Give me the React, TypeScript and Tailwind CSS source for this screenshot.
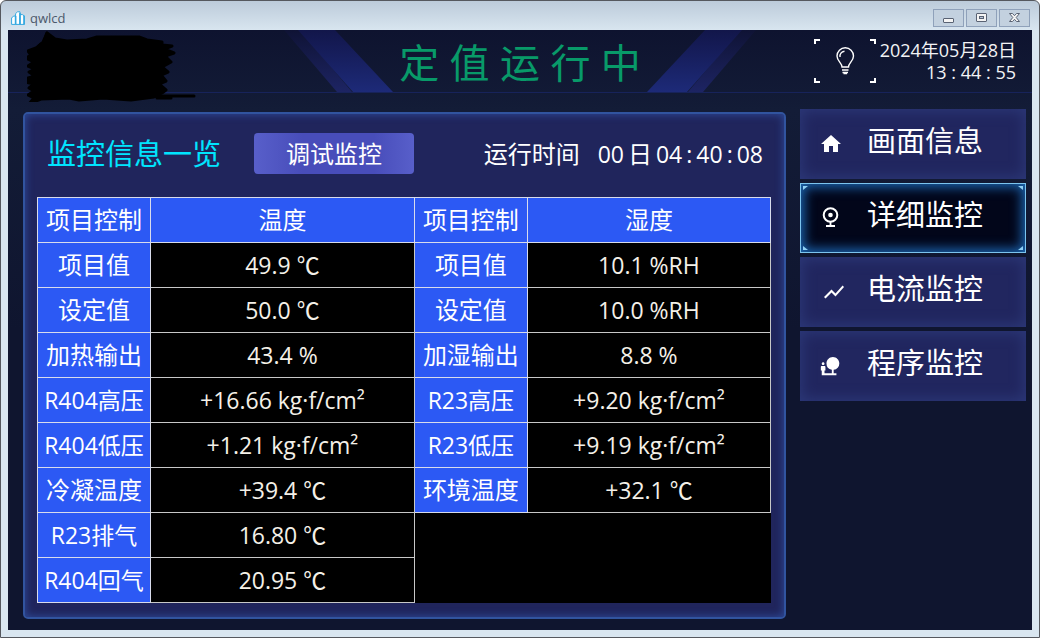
import { MdHome, MdNaturePeople, MdShowChart } from 'react-icons/md';

const rows = [
  ['项目值', '49.9 ℃', '项目值', '10.1 %RH'],
  ['设定值', '50.0 ℃', '设定值', '10.0 %RH'],
  ['加热输出', '43.4 %', '加湿输出', '8.8 %'],
  ['R404高压', '+16.66 kg·f/cm²', 'R23高压', '+9.20 kg·f/cm²'],
  ['R404低压', '+1.21 kg·f/cm²', 'R23低压', '+9.19 kg·f/cm²'],
  ['冷凝温度', '+39.4 ℃', '环境温度', '+32.1 ℃'],
  ['R23排气', '16.80 ℃'],
  ['R404回气', '20.95 ℃'],
];

function WebcamIcon() {
  return (
    <svg width="24" height="24" viewBox="0 0 24 24" fill="none" stroke="currentColor" strokeWidth="2">
      <circle cx="11.500" cy="9" r="6.800" />
      <circle cx="11.500" cy="9" r="2.300" fill="currentColor" stroke="none" />
      <path d="M11.500 16v4M7 20h9" strokeWidth="1.800" />
    </svg>
  );
}

const menu = [
  { label: '画面信息', icon: <MdHome size={24} /> },
  { label: '详细监控', icon: <WebcamIcon />, active: true },
  { label: '电流监控', icon: <MdShowChart size={24} className="ml-[3px]" /> },
  { label: '程序监控', icon: <MdNaturePeople size={22} /> },
];

function TitleBar() {
  const button =
    'flex h-[18px] w-[31px] items-center justify-center border border-[#8fa1ba] bg-[#c3d1df] text-[#4a5262]';
  return (
    <div className="flex h-[29px] items-center justify-between pl-[3px] pr-[2px] pt-1">
      <div className="flex items-center gap-[5px]">
        <svg width="14" height="14" viewBox="0 0 14 14" fill="#fff" stroke="#35a8e0">
          <path d="M.6 13.4V7l2-2h2v8.400z" />
          <path d="M4.600 13.400V2.600l2-1.800h2.400v12.600z" />
          <path d="M9 13.400V3.600h2.400l2 1.400v8.400z" />
          <path d="M4.600 5v8.400M9 2v11.400M13 4.500v9" strokeWidth="1.600" />
        </svg>
        <span className="text-[13px] leading-4 text-[#4c586b]">qwlcd</span>
      </div>
      <div className="flex gap-[2px]">
        <button aria-label="最小化" className={button}>
          <svg width="13" height="11" viewBox="0 0 13 11">
            <rect x="1.500" y="6.500" width="10" height="4" rx=".5" fill="#f4f4f4" stroke="#596273" />
          </svg>
        </button>
        <button aria-label="最大化" className={button}>
          <svg width="13" height="11" viewBox="0 0 13 11">
            <rect x="1.500" y="1.500" width="10" height="8" rx=".5" fill="#f4f4f4" stroke="#596273" />
            <rect x="4.500" y="4.500" width="4" height="2" fill="#b9c7d8" stroke="#596273" />
          </svg>
        </button>
        <button aria-label="关闭" className={button}>
          <svg width="13" height="11" viewBox="0 0 13 11">
            <path
              d="M1.500 1.500h3l2 2.200 2-2.200h3l-3.300 4 3.300 4h-3l-2-2.200-2 2.200h-3l3.300-4z"
              fill="#f4f4f4"
              stroke="#596273"
            />
          </svg>
        </button>
      </div>
    </div>
  );
}

function Stripes({ className }: { className?: string }) {
  return (
    <svg width="110" height="62" viewBox="0 0 110 62" className={className}>
      <defs>
        <linearGradient id="band" x1="0" y1="0" x2="0" y2="1">
          <stop offset="0" stopColor="#12164a" />
          <stop offset="1" stopColor="#1d2a78" />
        </linearGradient>
        <linearGradient id="bandDim" x1="0" y1="0" x2="0" y2="1">
          <stop offset="0" stopColor="#0f1335" />
          <stop offset="1" stopColor="#1d2463" />
        </linearGradient>
      </defs>
      <path d="M0 0h16l52 62H53z" fill="url(#bandDim)" />
      <path d="M14 0h37l58 62H69z" fill="url(#band)" />
    </svg>
  );
}

function Redaction() {
  return (
    <svg
      width="170"
      height="72"
      viewBox="0 0 170 72"
      className="absolute left-[19px] top-0"
      stroke="#000"
      strokeWidth="3"
      strokeLinecap="round"
      strokeLinejoin="round"
    >
      <path d="M17 12L20 3l8 6 12 2 20-1 10-3h42l8 3 15 2v3l10 1-8 3 10 4-9 3 6 6-9 5 6 5-7 3 5 6-7 3 7 6-4 3-8 4-23 3-28-2-24 2-10-2-28 1-12 5 5-6-6-3 6-4-5-3 5-4-9-2v-3l10-3-6-4 6-3-7-3 6-4-8-4 5-3-3-4 8-3z" />
      <path d="M18 12c-8 2-8 8-8 15M20 3l-4 9M120 66h47M130 68h14" fill="none" />
    </svg>
  );
}

function Header() {
  return (
    <header className="relative grid h-[63px] grid-cols-[1fr_auto_1fr] border-b border-[#17235a]">
      <div>
        <Redaction />
      </div>
      <div className="flex items-start">
        <Stripes />
        <h1 className="w-[252px] whitespace-nowrap text-center text-[40px] leading-[66px] text-[#089a69]">
          定 值 运 行 中
        </h1>
        <Stripes className="-scale-x-100" />
      </div>
      <div className="flex h-[62px] items-center justify-end gap-1 pr-4">
        <button aria-label="照明" className="relative flex h-11 w-[62px] items-center justify-center text-white">
          <svg width="62" height="44" viewBox="0 0 62 44" fill="none" stroke="#fff" className="absolute inset-0">
            <path d="M1 5V1h5M56 1h5v4M61 39v4h-5M6 43H1v-4" strokeWidth="2" />
            <g strokeWidth="1.400">
              <path d="M28 28c0-4-5-6-5-11a8 8 0 0 1 16.500 0c0 5-5 7-5 11zM28 31h6.500M28.500 33.500h5.500" />
              <path d="M29.500 34.500h3.500M26 18c-.5-3 1.500-5.500 4.500-5.800" />
            </g>
          </svg>
        </button>
        <div className="text-right text-[18px] leading-[22px] text-[#f3f3f5]">
          <div>2024年05月28日</div>
          <div>13 : 44 : 55</div>
        </div>
      </div>
    </header>
  );
}

function LabelCell({ text }: { text: string }) {
  return (
    <th
      scope="row"
      className={`border border-[#d8dcec] bg-[#2c59f4] p-0 text-center font-normal text-white ${
        text.startsWith('R') ? 'text-[23px]' : ''
      }`}
    >
      {text}
    </th>
  );
}

function MonitorTable() {
  const value = 'border border-[#c8c8c8] bg-black p-0 text-center text-[23px] text-[#f4f0e8]';
  return (
    <table className="w-full table-fixed border-collapse whitespace-nowrap bg-black text-[24px] leading-8">
      <colgroup>
        <col className="w-[113px]" />
        <col className="w-[36%]" />
        <col className="w-[113px]" />
        <col />
      </colgroup>
      <thead>
        <tr className="h-[45px]">
          {['项目控制', '温度', '项目控制', '湿度'].map((h, i) => (
            <th
              key={i}
              scope="col"
              className="border border-[#d8dcec] bg-[#2c59f4] p-0 text-center font-normal text-white"
            >
              {h}
            </th>
          ))}
        </tr>
      </thead>
      <tbody>
        {rows.map(([l1, v1, l2, v2]) => (
          <tr key={l1} className="h-[45px]">
            <LabelCell text={l1} />
            <td className={value}>{v1}</td>
            {l2 ? (
              <>
                <LabelCell text={l2} />
                <td className={value}>{v2}</td>
              </>
            ) : (
              <td colSpan={2} />
            )}
          </tr>
        ))}
      </tbody>
    </table>
  );
}

export default function App() {
  return (
    <div className="flex min-h-screen flex-col rounded-t-md border border-[#55585e] bg-[linear-gradient(#bccbda,#d9e6f0_30px)] px-[7px] pb-[7px] font-['Open_Sans','Noto_Sans_CJK_SC',sans-serif]">
      <TitleBar />
      <div className="flex-1 bg-[linear-gradient(#0e132f,#131c37_80px,#0f152f_50%)] bg-[#0f152f]">
        <Header />
        <div className="flex items-start gap-[14px] pb-[11px] pl-[15px] pr-[6px] pt-4">
          <main className="mt-[3px] min-w-0 flex-1 rounded-[5px] border-2 border-[#31549f] bg-[#20255c] pb-[14px] pl-3 pr-[13px] shadow-[inset_0_0_8px_#2f4fa0]">
            <div className="flex h-[83px] items-center pb-1 pl-[10px] pr-2 text-[24px] leading-8 text-white">
              <h2 className="text-[29px] text-[#00e5ff]">监控信息一览</h2>
              <button className="ml-[33px] h-[41px] w-40 rounded bg-[linear-gradient(90deg,#585fca,#484dba_30%,#484dba_75%,#585fca)]">
                调试监控
              </button>
              <div className="ml-auto flex items-center">
                <span className="mr-[18px]">运行时间</span>
                <span className="mr-1 text-[23px]">00</span>
                <span className="mr-1">日</span>
                <span className="flex gap-1 text-[23px]">
                  <span>04</span>
                  <span>:</span>
                  <span>40</span>
                  <span>:</span>
                  <span>08</span>
                </span>
              </div>
            </div>
            <MonitorTable />
          </main>
          <nav className="flex w-[226px] flex-col gap-1">
            {menu.map((item) => (
              <button
                key={item.label}
                className={
                  item.active
                    ? 'relative flex h-[70px] items-center border border-[#7cc4ee] bg-[#02061a] pl-[18px] text-white shadow-[inset_0_0_12px_3px_#1c67b4]'
                    : 'flex h-[70px] items-center bg-[#21265f] pl-[19px] text-white shadow-[inset_0_0_14px_2px_#2c3878]'
                }
              >
                {item.active && (
                  <svg className="absolute inset-0 size-full" fill="#8fd0f5">
                    <path d="M2 2h5l-5 4z" />
                    <path d="M222 2h-5l5 4z" />
                    <path d="M2 66h5l-5-4z" />
                    <path d="M222 66h-5l5-4z" />
                  </svg>
                )}
                <span className="flex w-12">{item.icon}</span>
                <span className="pb-[6px] text-[29px] leading-9">{item.label}</span>
              </button>
            ))}
          </nav>
        </div>
      </div>
    </div>
  );
}
